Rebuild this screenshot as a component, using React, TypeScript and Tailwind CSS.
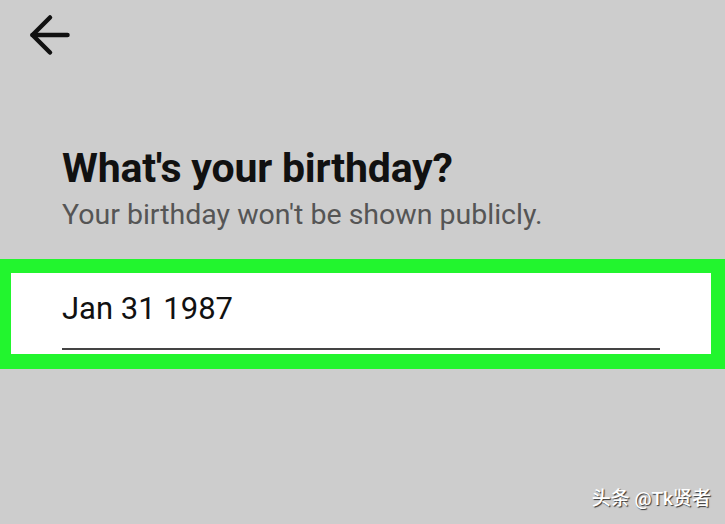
import { ArrowLeft } from "lucide-react";

export default function App() {
  return (
    <div className="relative w-[725px] h-[524px] overflow-hidden bg-[#cdcdcd] font-['Roboto','Noto_Sans_CJK_SC',sans-serif]">
      <div className="pl-[20px] pt-[5px] h-[65px]">
        <ArrowLeft className="w-[60px] h-[60px] text-[#111]" strokeWidth={1.8} />
      </div>

      <div className="pl-[62px] pt-[79px]">
        <h1 className="text-[41px] leading-[48px] font-bold text-[#111] tracking-[-0.2px]">What's your birthday?</h1>
        <p className="mt-[6px] text-[28.5px] leading-[34px] text-[#555]">Your birthday won't be shown publicly.</p>
      </div>

      <div className="mt-[27px] bg-[#22f52e] pl-[11px] pr-[14px] pt-[14px] pb-[15px]">
        <div className="bg-white h-[81px] pl-[51px] pr-[51px] pt-[18px]">
          <div className="text-[31px] leading-[36px] text-[#111]">Jan 31 1987</div>
          <div className="mt-[21px] h-[2px] w-[598px] bg-[#444]" />
        </div>
      </div>

      <div className="absolute right-[14px] bottom-[14px] text-[19px] leading-[22px] font-medium text-white [text-shadow:1px_1px_1px_#333]">头条 @Tk贤者</div>
    </div>
  );
}
